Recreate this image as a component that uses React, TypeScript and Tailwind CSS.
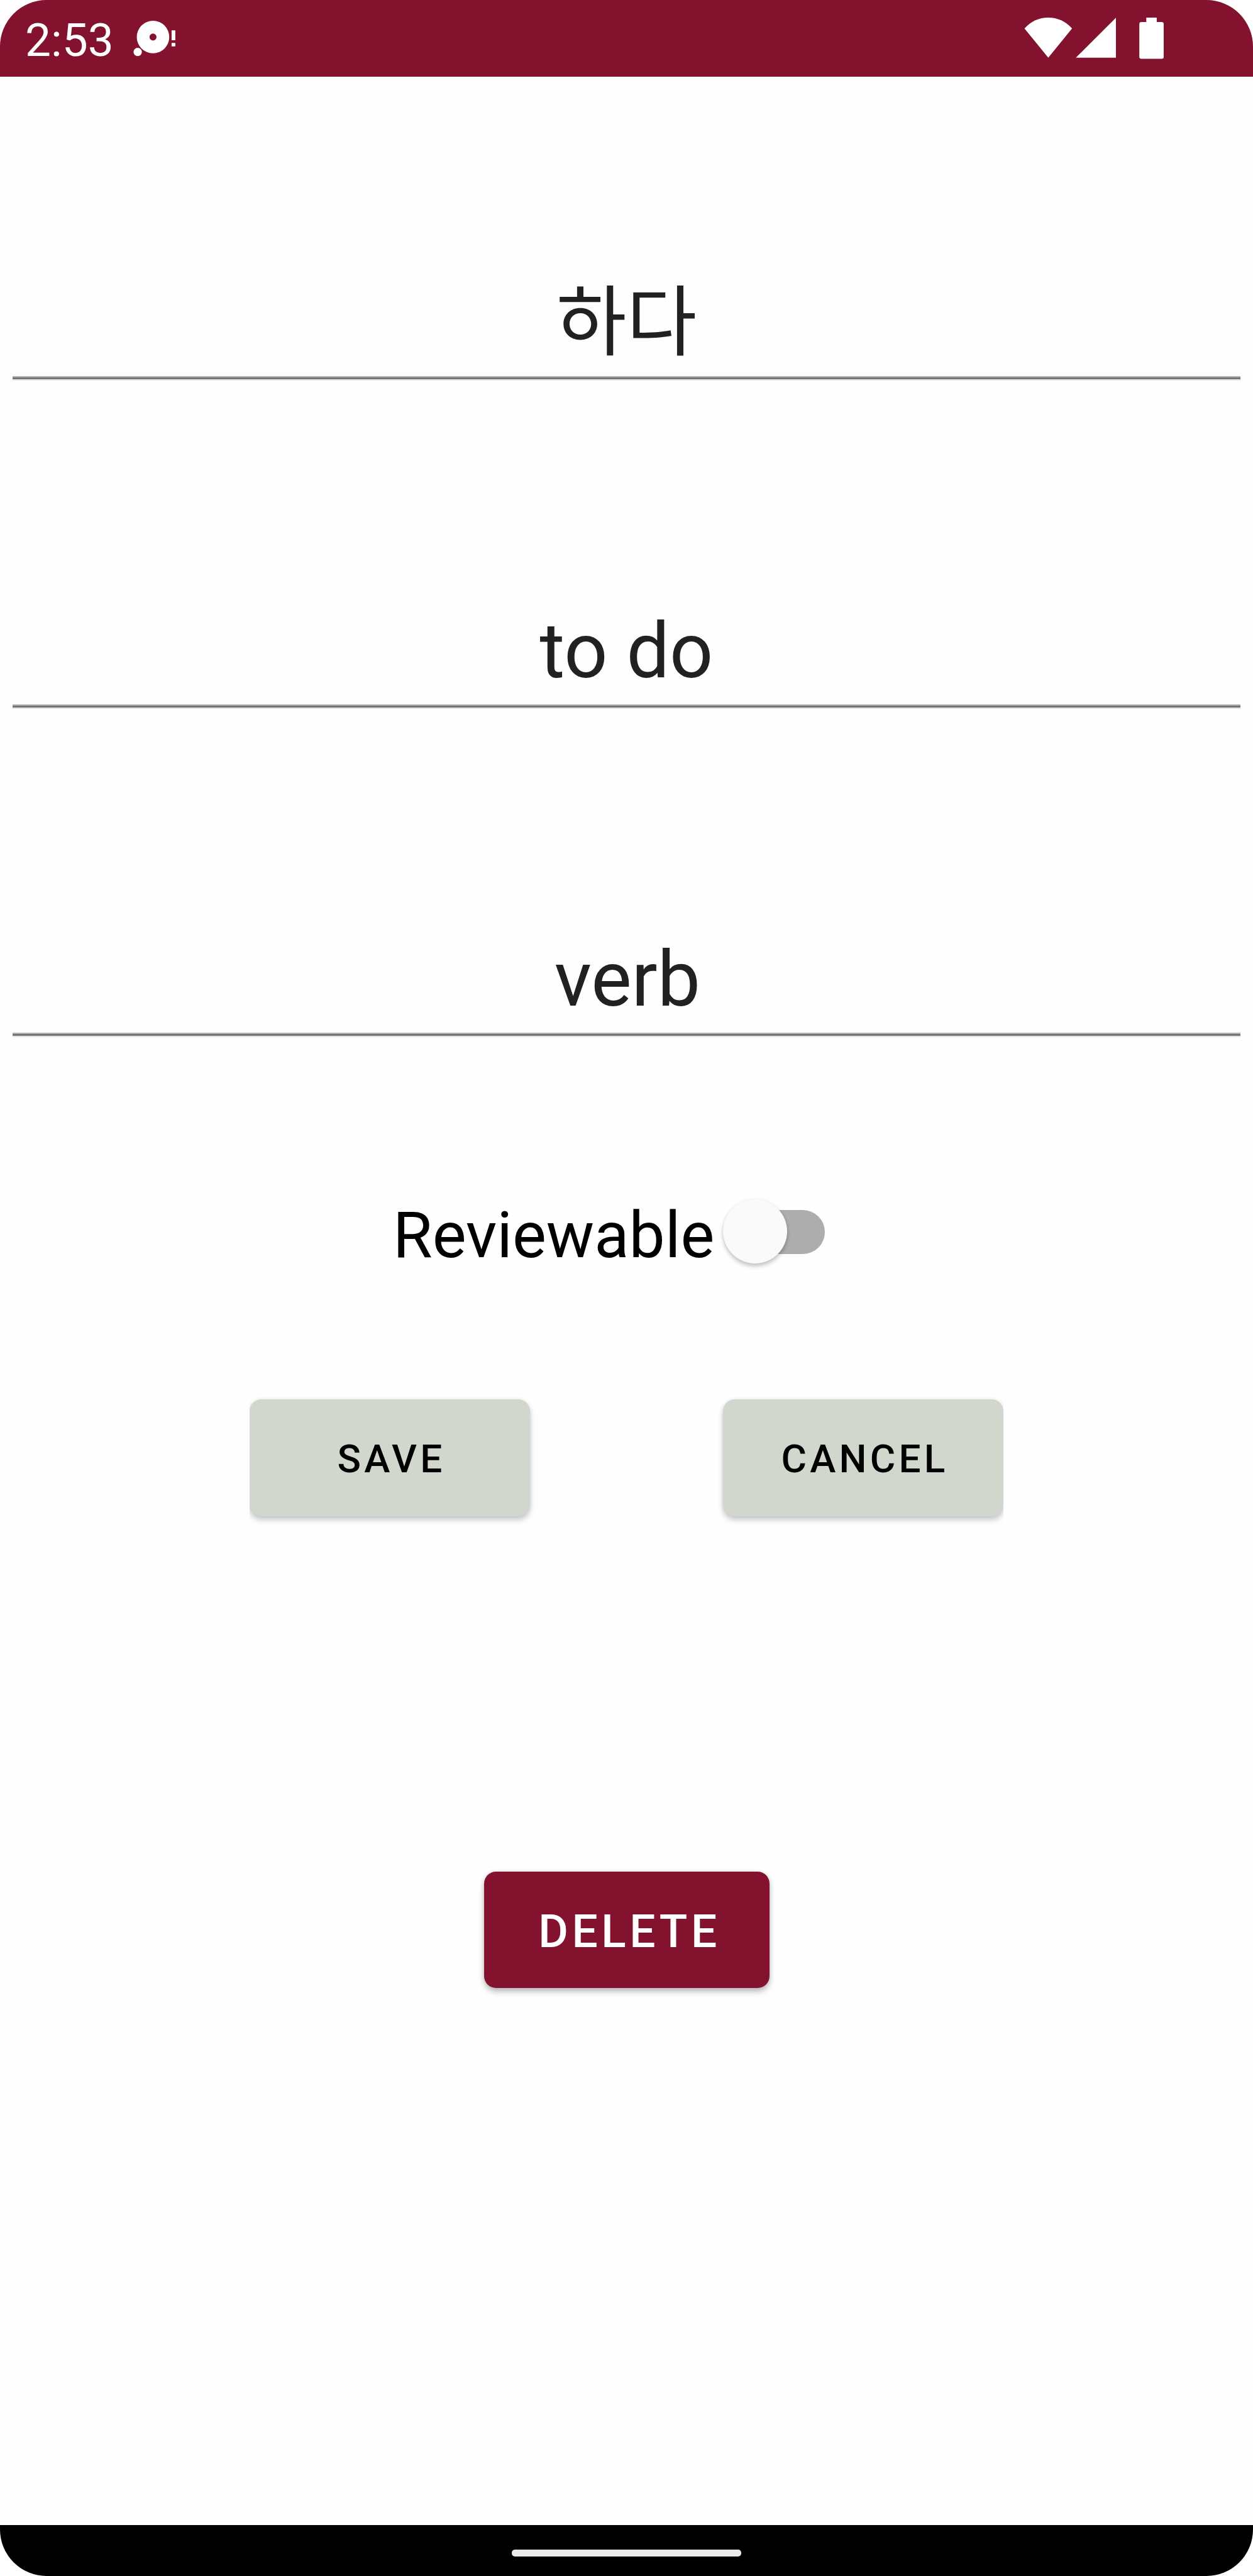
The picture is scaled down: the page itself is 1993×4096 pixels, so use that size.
import React from "react";

function Field({ value, textClass }: { value: string; textClass: string }) {
  return (
    <div className="flex h-[522px] flex-col justify-end px-[20px]">
      <div className={`text-center text-[121.5px] leading-[160px] text-[#212121] ${textClass}`}>{value}</div>
      <div className="h-[7px] w-full shrink-0 bg-[linear-gradient(#b3b3b3_0_1.8px,#757575_1.8px_5.5px,#e1e1e1_5.5px_7px)]" />
    </div>
  );
}

function StatusBar() {
  return (
    <header className="flex h-[122px] items-start justify-between bg-[#82122d] text-white">
      <div className="flex">
        <span className="ml-[40px] mt-[14px] w-[140px] text-[73px] leading-[100px]">2:53</span>
        <svg className="ml-[32px] mt-[30px] h-[60px] w-[78px]" viewBox="230 32.5 84.5 65" fill="currentColor">
          <path
            fillRule="evenodd"
            d="M264 35.8a28 28 0 1 0 0 56a28 28 0 1 0 0-56zM264 57.8a6 6 0 1 1 0 12a6 6 0 1 1 0-12z"
          />
          <circle cx="237.6" cy="89.5" r="7.2" />
          <path d="M296 52.3h6.4v17h-6.4zM296 74h6.4v6h-6.4z" />
        </svg>
      </div>
      <svg className="mr-[139px] mt-[24px] h-[72px] w-[230px]" viewBox="1760 26 249.3 78" fill="currentColor">
        <path d="M1766 49Q1783 30.3 1807 30.3T1848 49L1807 99.5z" />
        <path d="M1923.6 30.5V99.5H1854.6z" />
        <path d="M1976 30.3h18V38h8.5q3.500 0 3.500 3.500V98q0 3.300-3.500 3.300h-35q-3.500 0-3.500-3.300V41.500q0-3.500 3.500-3.500h8.500z" />
      </svg>
    </header>
  );
}

export default function App() {
  return (
    <div className="h-[4096px] w-[1993px] overflow-hidden bg-white">
      <div className="flex h-full flex-col overflow-hidden rounded-[74px] bg-[#fefefe] font-[Roboto,sans-serif]">
        <StatusBar />
        <main className="flex-1">
          <div className="-mt-[39px]">
            <Field value="하다" textClass="mb-[16px] font-['Noto_Sans_CJK_KR',sans-serif]" />
            <Field value="to do" textClass="mb-[4px]" />
            <Field value="verb" textClass="mb-[4px] pl-[3px]" />
          </div>

          <div className="mt-[239px] flex h-[140px] items-center pl-[625px]">
            <span className="mt-[14px] w-[525px] text-[101.7px] leading-[140px] text-black">Reviewable</span>
            <div className="relative h-[102px] w-[162px]">
              <div className="absolute right-0 top-[17px] h-[70px] w-[130px] rounded-full bg-[#adadad]" />
              <div className="absolute left-0 top-0 size-[102px] rounded-full bg-[#fafafa] shadow-[0_5px_6px_rgba(0,0,0,0.2),0_0_5px_rgba(0,0,0,0.08)]" />
            </div>
          </div>

          <div className="ml-[397px] mt-[177px] flex h-[220px] w-[1199px] items-start justify-between overflow-hidden pt-[20px] text-[62px] font-medium leading-none tracking-[0.084em] text-black">
            <button className="h-[186px] w-[446px] rounded-[19px] bg-[#d2d7cd] pl-[5px] pt-[4px] shadow-[0_6px_10px_rgba(0,0,0,0.2),0_0_6px_rgba(0,0,0,0.08)]">
              SAVE
            </button>
            <button className="h-[186px] w-[446px] rounded-[19px] bg-[#d2d7cd] pl-[5px] pt-[4px] shadow-[0_6px_10px_rgba(0,0,0,0.2),0_0_6px_rgba(0,0,0,0.08)]">
              CANCEL
            </button>
          </div>

          <button className="mx-auto mt-[551px] block h-[185px] w-[454px] rounded-[19px] bg-[#82122d] pl-[9px] pt-[5px] text-[73px] font-medium leading-none tracking-[5.6px] text-white shadow-[0_6px_10px_rgba(0,0,0,0.25),0_0_6px_rgba(0,0,0,0.1)]">
            DELETE
          </button>
        </main>
        <footer className="flex h-[81px] justify-center bg-black pt-[39px]">
          <div className="h-[11px] w-[365px] rounded-[5px] bg-[#eaeaea]" />
        </footer>
      </div>
    </div>
  );
}
